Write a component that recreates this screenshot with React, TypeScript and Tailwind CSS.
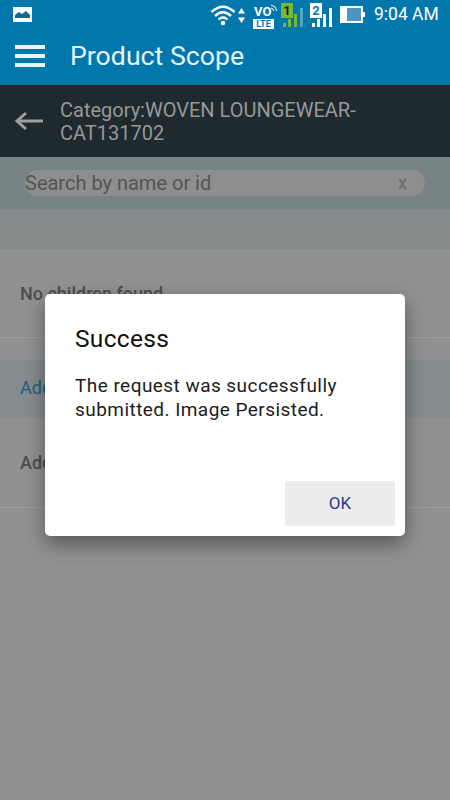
import React from "react";

const font = { fontFamily: "Roboto, sans-serif" };

function StatusIcons() {
  return (
    <div className="flex items-center h-full">
      <svg width="35" height="22" viewBox="0 0 35 22" className="ml-[210px]" fill="none" stroke="#fff">
        <path d="M1.500 8 Q13 -2.500 24.500 8" strokeWidth="2.400" />
        <path d="M5 12 Q13 4.500 21 12" strokeWidth="2.400" />
        <path d="M8.500 15.500 Q13 11.500 17.500 15.500" strokeWidth="2.200" />
        <circle cx="13" cy="19" r="2.200" fill="#fff" stroke="none" />
        <path d="M31.500 4 L35 9.500 H28Z M31.500 19 L35 13.500 H28Z" fill="#fff" stroke="none" />
      </svg>
      <div className="relative ml-[8px] w-[24px] h-[24px]">
        <span className="absolute left-[1px] top-[3px] text-white font-bold text-[13px] leading-[12px]">VO</span>
        <svg width="8" height="8" viewBox="0 0 8 8" className="absolute right-[-1px] top-[1px]" fill="none" stroke="#fff" strokeWidth="1">
          <path d="M1 1 Q6 2 7 7" />
          <path d="M1 4 Q3.500 4.500 4 7" />
        </svg>
        <span className="absolute left-0 top-[16px] w-[21px] h-[10px] bg-white text-[#0277ac] font-bold text-[9px] leading-[10px] text-center">LTE</span>
      </div>
      <div className="relative ml-[4px] w-[24px] h-[26px]">
        <span className="absolute left-0 top-[1px] w-[12px] h-[15px] bg-[#7cb82f] text-[#123] font-bold text-[13px] leading-[15px] text-center">1</span>
        <svg width="24" height="26" viewBox="0 0 24 26" className="absolute left-0 top-0">
          <rect x="2" y="21" width="3" height="4" fill="#7cb82f" />
          <rect x="7" y="17" width="3" height="8" fill="#7cb82f" />
          <rect x="13" y="12" width="3" height="13" fill="#7cb82f" />
          <rect x="19" y="6" width="3" height="19" fill="#9cc" opacity="0.55" />
        </svg>
      </div>
      <div className="relative ml-[5px] w-[24px] h-[26px]">
        <span className="absolute left-0 top-[1px] w-[12px] h-[15px] bg-white text-[#0277ac] font-bold text-[13px] leading-[15px] text-center">2</span>
        <svg width="24" height="26" viewBox="0 0 24 26" className="absolute left-0 top-0">
          <rect x="2" y="21" width="3" height="4" fill="#fff" />
          <rect x="7" y="17" width="3" height="8" fill="#fff" />
          <rect x="13" y="12" width="3" height="13" fill="#fff" />
          <rect x="19" y="6" width="3" height="19" fill="#fff" />
        </svg>
      </div>
      <svg width="26" height="18" viewBox="0 0 26 18" className="ml-[6px]">
        <rect x="1" y="1" width="21" height="15" fill="#4d96c3" stroke="#fff" strokeWidth="2" />
        <rect x="1" y="1" width="6" height="15" fill="#fff" />
        <rect x="22" y="6" width="3" height="5" fill="#fff" />
      </svg>
      <span className="ml-[8px] text-white text-[17.500px] leading-none whitespace-nowrap">9:04 AM</span>
    </div>
  );
}

export default function App() {
  return (
    <div style={font} className="relative w-[450px] h-[800px] overflow-hidden bg-[#919191] flex flex-col">
      {/* App bar */}
      <div className="h-[85px] bg-[#0277ac] flex flex-col shrink-0">
        <div className="relative h-[29px] shrink-0">
          <svg width="20" height="16" viewBox="0 0 20 16" className="absolute left-[13px] top-[7px]">
            <rect x="0" y="0" width="19" height="15" fill="#fff" />
            <path d="M2 11 L2 8 L6 5 L9 7 L13 4 L17 8 L17 11Z" fill="#0f6a98" />
          </svg>
          <StatusIcons />
        </div>
        <div className="flex items-center h-[56px] pb-[2px]">
          <div className="ml-[15px] w-[30px] flex flex-col gap-[5px]">
            <div className="h-[4px] bg-[#e8f6fb]" />
            <div className="h-[4px] bg-[#e8f6fb]" />
            <div className="h-[4px] bg-[#e8f6fb]" />
          </div>
          <span className="ml-[25px] text-[26.700px] text-[#e3f4fa]">Product Scope</span>
        </div>
      </div>

      {/* Sub header */}
      <div className="h-[72px] bg-[#1f2a2e] flex items-center shrink-0">
        <svg width="30" height="22" viewBox="0 0 30 22" className="ml-[14px]" fill="none" stroke="#9ca0a0" strokeWidth="3">
          <path d="M29 11 H3" />
          <path d="M12 3 L3 11 L12 19" />
        </svg>
        <div className="ml-[16px] text-[20px] leading-[23px] text-[#95989a] pt-[1px]">
          Category:WOVEN LOUNGEWEAR-
          <br />
          CAT131702
        </div>
      </div>

      {/* Search */}
      <div className="h-[52px] bg-[#788386] flex items-center justify-center shrink-0">
        <div className="w-[400px] h-[26px] rounded-[13px] bg-[#8e8e8e] flex items-center justify-between pr-[18px]">
          <span className="text-[20px] text-[#555] leading-none">Search by name or id</span>
          <span className="text-[18px] font-medium text-[#6d6d6d] leading-none">x</span>
        </div>
      </div>

      <div className="h-[40px] bg-[#858a8a] shrink-0" />

      {/* Rows */}
      <div className="h-[89px] border-b border-[#9c9c9c] flex items-center px-[20px] shrink-0 pt-[1px]">
        <span className="text-[18px] font-medium text-[#4e4e4e]">No children found</span>
      </div>
      <div className="h-[22px] shrink-0" />
      <div className="h-[58px] bg-[#858c8e] flex items-center px-[20px] shrink-0 pb-[3px]">
        <span className="text-[18px] text-[#1d5f80]">Add</span>
      </div>
      <div className="h-[90px] border-b border-[#9c9c9c] flex items-center px-[20px] shrink-0">
        <span className="text-[18px] font-medium text-[#4e4e4e]">Add</span>
      </div>

      {/* Dialog */}
      <div className="absolute left-[45px] top-[294px] w-[360px] h-[242px] bg-white rounded-[5px] shadow-[0_8px_20px_rgba(0,0,0,0.4)] flex flex-col">
        <div className="px-[30px] pt-[30px] text-[24.500px] leading-[30px] text-[#111] tracking-[0.3px]">Success</div>
        <div className="px-[30px] mt-[20px] text-[19px] leading-[24px] text-[#1c1c1c] tracking-[0.45px]">
          The request was successfully
          <br />
          submitted. Image Persisted.
        </div>
        <div className="mt-auto flex justify-end pr-[10px] pb-[10px]">
          <div className="w-[110px] h-[45px] bg-[#ececec] rounded-[3px] flex items-center justify-center text-[17px] text-[#2b3a8c]">
            OK
          </div>
        </div>
      </div>
    </div>
  );
}
